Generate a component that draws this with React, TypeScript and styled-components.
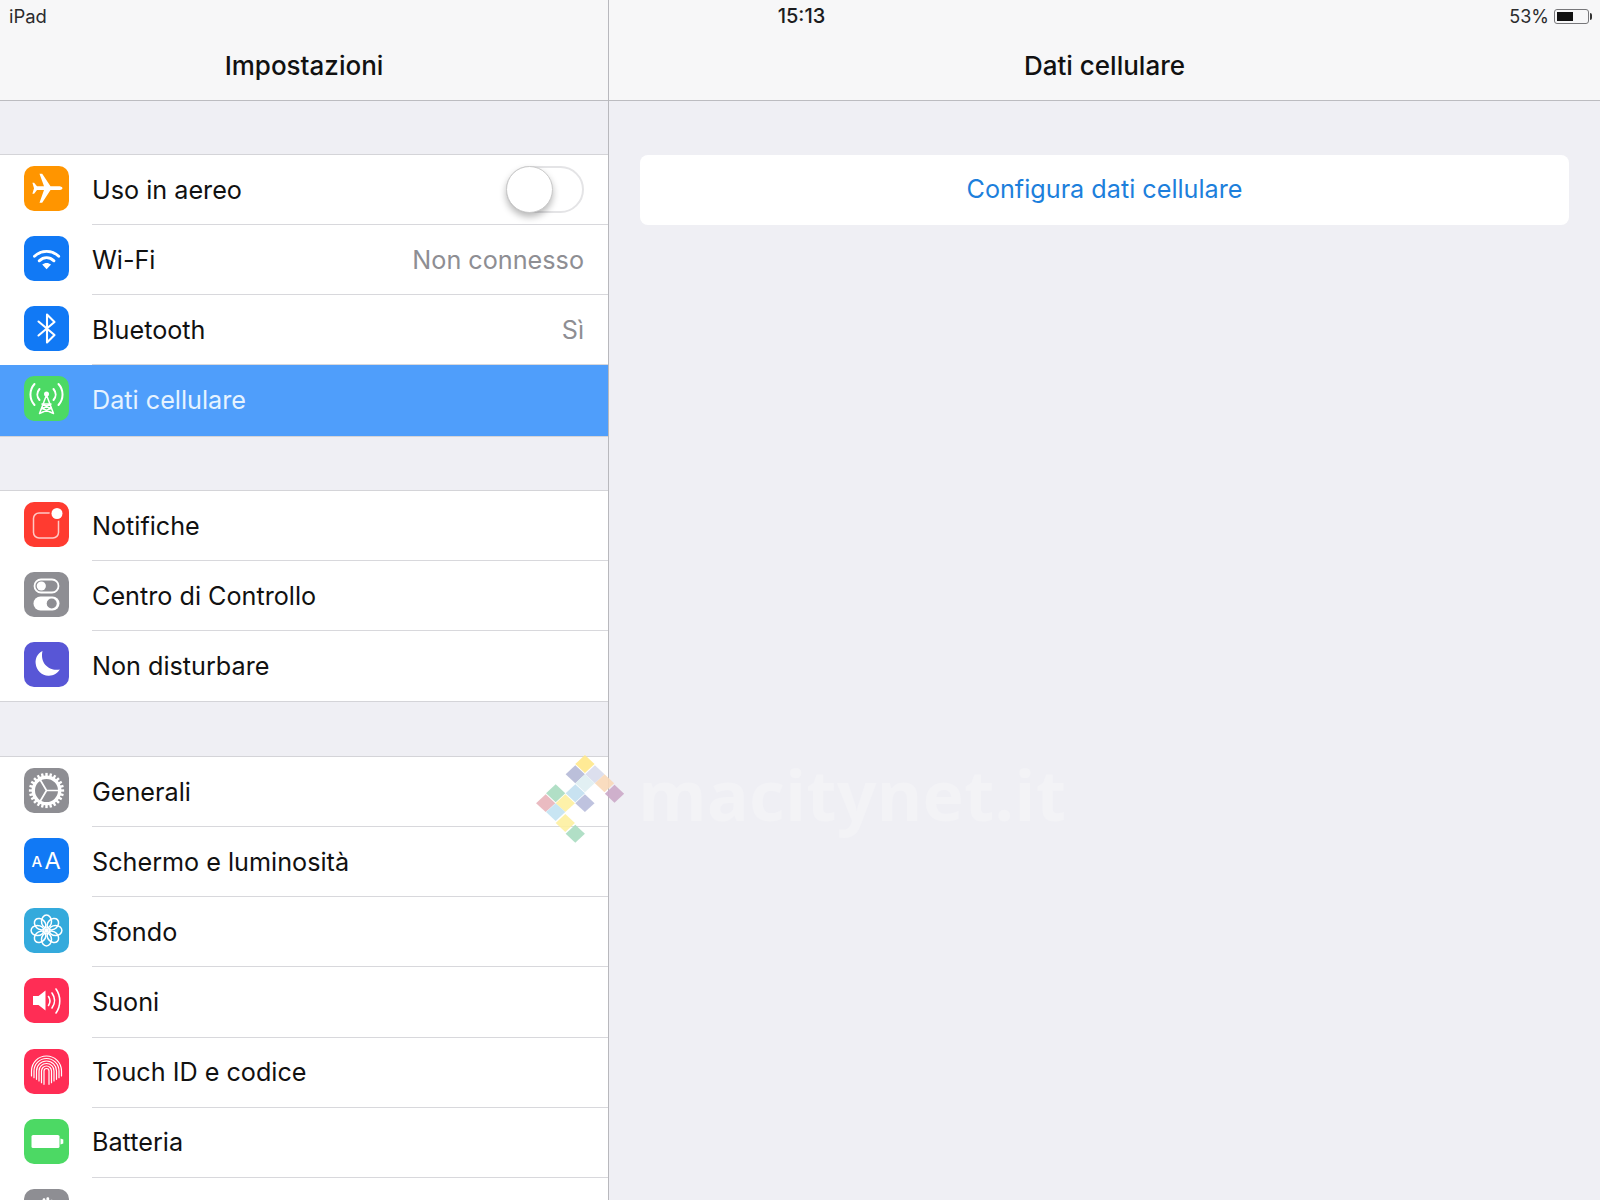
import React from "react"
import styled, { createGlobalStyle } from "styled-components"

const GlobalStyle = createGlobalStyle`
html, body {
    margin: 0;
    padding: 0;
    background: #efeff4;
}
* {
    box-sizing: border-box;
}
`

const ink = { fill: "none", stroke: "#fff", strokeLinecap: "round", strokeLinejoin: "round" } as const

const PlaneIcon = () => (
    <svg viewBox="0 0 45 45" width="45" height="45">
        <path fill="#fff" d="M38.500 22.200c0-1.300-2.200-1.900-4.200-1.900H26.500L18.200 7.700h-2.700L20 20.300h-7l-2.900-3.600H8.400L10 22.200 8.400 27.700h1.700l2.900-3.600h7L15.500 36.700h2.700l8.300-12.600h7.800c2 0 4.200-.6 4.200-1.900z" />
    </svg>
)

const WifiIcon = () => (
    <svg viewBox="0 0 45 45" width="45" height="45">
        <path {...ink} strokeWidth="2.900" d="M10.500 20.200c7-6.400 17.200-6.400 24.200 0" />
        <path {...ink} strokeWidth="2.900" d="M15.200 24.800c4.500-4 10.300-4 14.800 0" />
        <path fill="#fff" d="M22.600 33.200l-4.400-4.600c2.500-2.200 6.300-2.200 8.800 0z" />
    </svg>
)

const BluetoothIcon = () => (
    <svg viewBox="0 0 45 45" width="45" height="45">
        <path {...ink} strokeWidth="2.100" d="M14.500 15.500l16 13.500-7.500 7.500V8.500l7.500 7.500-16 13.500" />
    </svg>
)

const CellularIcon = () => (
    <svg viewBox="0 0 45 45" width="45" height="45">
        <circle cx="22.500" cy="18" r="2.500" fill="#fff" />
        <path {...ink} strokeWidth="1.500" d="M22.500 19L15.500 37.500M22.500 19l7 18.500M19 28h7M17.500 33l9.500-5M27.500 33l-9.500-5M15.500 37.500l10-4.500M29.500 37.500l-10-4.500" />
        <path {...ink} strokeWidth="2" d="M15.500 13c-2.800 3.300-2.800 7.700 0 11M29.500 13c2.800 3.300 2.800 7.700 0 11M10.500 8c-5.400 6-5.400 15 0 21M34.500 8c5.400 6 5.400 15 0 21" />
    </svg>
)

const NotifyIcon = () => (
    <svg viewBox="0 0 45 45" width="45" height="45">
        <rect x="9.500" y="11" width="25" height="25" rx="5.500" {...ink} stroke="#ffc9c5" strokeWidth="1.500" />
        <circle cx="33" cy="11.500" r="7.400" fill="#ff3b30" />
        <circle cx="33" cy="11.500" r="5.500" fill="#fff" />
    </svg>
)

const SwitchesIcon = () => (
    <svg viewBox="0 0 45 45" width="45" height="45">
        <rect x="10.500" y="7.500" width="24" height="13" rx="6.500" {...ink} strokeWidth="1.800" />
        <circle cx="17.300" cy="14" r="4.600" fill="#fff" />
        <rect x="9.500" y="24.500" width="26" height="14" rx="7" fill="#fff" />
        <circle cx="27.700" cy="31.500" r="5" fill="#8e8e93" />
    </svg>
)

const MoonIcon = () => (
    <svg viewBox="0 0 45 45" width="45" height="45">
        <path fill="#fff" d="M18.500 9C13.500 11.500 11 16.500 11.700 21.800c.8 7 6.600 12.300 13.300 11.900 4.600-.3 8.700-2.600 10.800-6.300-9.600 2.300-20.300-5.400-17.300-18.400z" />
    </svg>
)

const GearIcon = () => (
    <svg viewBox="0 0 45 45" width="45" height="45">
        {Array.from({ length: 24 }).map((_, i) => (
            <rect key={i} x="21.300" y="4.900" width="2.400" height="5" fill="#fff" transform={`rotate(${i * 15} 22.500 22.500)`} />
        ))}
        <circle cx="22.500" cy="22.500" r="13.200" {...ink} strokeWidth="3.400" />
        <path {...ink} strokeWidth="1.700" d="M22.500 22.500H35M22.500 22.500L16 11.500M22.500 22.500L16 33.500" />
    </svg>
)

const AaIcon = () => (
    <svg viewBox="0 0 45 45" width="45" height="45">
        <text x="7.500" y="29" fill="#fff" fontFamily="Inter, sans-serif" fontSize="15" fontWeight="500">A</text>
        <text x="20.500" y="31" fill="#fff" fontFamily="Inter, sans-serif" fontSize="23.500">A</text>
    </svg>
)

const FlowerIcon = () => (
    <svg viewBox="0 0 45 45" width="45" height="45">
        {Array.from({ length: 8 }).map((_, i) => (
            <ellipse key={i} cx="22.500" cy="13.500" rx="5" ry="6.400" {...ink} strokeWidth="1.500" transform={`rotate(${i * 45} 22.500 22.500)`} />
        ))}
        <circle cx="22.500" cy="22.500" r="1.900" fill="#fff" />
    </svg>
)

const SpeakerIcon = () => (
    <svg viewBox="0 0 45 45" width="45" height="45">
        <path fill="#fff" d="M9 18h5.500l7-5.500v20l-7-5.500H9z" />
        <path {...ink} strokeWidth="1.600" d="M24.500 18.500c2 3 2 6 0 9M28 15c3.500 5 3.500 10 0 15M32 11c5 7 5 17 0 24" />
    </svg>
)

const FingerprintIcon = () => (
    <svg viewBox="0 0 45 45" width="45" height="45">
        <g {...ink} strokeWidth="1.200">
            {[15, 12.500, 10, 7.500, 5, 2.500].map((r)=>(
                <path key={r} d={`M${22.500 - r} ${37 - r / 1.500}V22a${r} ${r} 0 0 1 ${r * 2} 0V${37 - r / 1.500}`} />
            ))}
        </g>
    </svg>
)

const BatteryGlyph = () => (
    <svg viewBox="0 0 45 45" width="45" height="45">
        <rect x="7.500" y="16" width="28" height="13" rx="1.600" fill="#fff" />
        <path fill="#fff" d="M36.500 19.500l2.800 1v4l-2.800 1z" />
    </svg>
)

const HandIcon = () => (
    <svg viewBox="0 0 45 45" width="45" height="45">
        <path fill="#fff" d="M15 24V14c0-1.800 2.600-1.800 2.600 0v7h1V10.500c0-1.800 2.800-1.800 2.800 0V21h1V9.500c0-1.800 2.800-1.800 2.800 0V21h1V12c0-1.800 2.700-1.800 2.700 0v16c0 6-3.500 9-8 9-4 0-6-2-8-6l-3.500-7c-.8-1.600 1.300-2.800 2.400-1.500z" />
    </svg>
)

const Shell = styled.div`
position: relative;
width: 1600px;
height: 1200px;
overflow: hidden;
display: flex;
background-color: #efeff4;
font-family: Inter, "Liberation Sans", sans-serif;
`
const StatusBar = styled.div`
position: absolute;
top: 0;
left: 0;
right: 0;
height: 32px;
padding: 0 11px 0 9px;
display: grid;
grid-template-columns: 1fr auto 1fr;
align-items: center;
font-size: 18.400px;
color: #2b2b2d;
`
const Clock = styled.span`
margin-left: 5px;
font-weight: 500;
font-size: 20px;
color: #1c1c1e;
`
const Power = styled.div`
justify-self: end;
display: flex;
align-items: center;
gap: 5px;
font-size: 18px;
`
const BatteryCase = styled.div`
position: relative;
width: 35px;
height: 15px;
padding: 2px;
border: 1px solid #77777a;
border-radius: 3px;
&::after{
    content: "";
    position: absolute;
    top: 3px;
    right: -4px;
    width: 2px;
    height: 7px;
    border-radius: 0 2px 2px 0;
    background-color: #333;
}
`
const BatteryLevel = styled.div<{level: number}>`
height: 100%;
width: ${({level})=>level}%;
background-color: #111;
`
const Sidebar = styled.aside`
width: 609px;
flex-shrink: 0;
border-right: 1px solid #b8b8bd;
`
const Detail = styled.main`
flex: 1;
`
const NavBar = styled.header`
height: 101px;
padding-top: 31px;
display: flex;
align-items: center;
justify-content: center;
background-color: #f7f7f8;
border-bottom: 1px solid #bcbcc0;
font-size: 26px;
font-weight: 500;
color: #111;
`
const Group = styled.section`
margin-top: 55.500px;
background-color: #fff;
box-shadow: 0 -1px 0 #d4d4d8, 0 1px 0 #d4d4d8;
&:first-of-type{
    margin-top: 54px;
}
`
const Row = styled.div<{active?: boolean}>`
height: 70.150px;
padding-left: 23.500px;
display: flex;
align-items: stretch;
gap: 23.500px;
font-size: 25.200px;
color: ${({active})=>active ? "#e6f3ff" : "#111"};
background-color: ${({active})=>active ? "#4f9efb" : "transparent"};
`
const IconTile = styled.div<{tone: string}>`
align-self: center;
width: 45px;
height: 45px;
margin-bottom: 3px;
flex-shrink: 0;
border-radius: 10px;
overflow: hidden;
display: flex;
background-color: ${({tone})=>tone};
`
const RowBody = styled.div<{flat?: boolean}>`
flex: 1;
padding-right: 24px;
display: flex;
align-items: center;
justify-content: space-between;
border-bottom: 1px solid ${({flat})=>flat ? "transparent" : "#d8d8dc"};
`
const RowValue = styled.span`
color: #8e8e93;
`
const Toggle = styled.div`
position: relative;
width: 78px;
height: 47px;
border: 2px solid #e4e4e6;
border-radius: 24px;
background-color: #fff;
`
const Knob = styled.div`
position: absolute;
top: -2px;
left: -2px;
width: 47px;
height: 47px;
border-radius: 50%;
background-color: #fff;
border: 1px solid #c9c9c9;
box-shadow: 0 4px 7px rgba(0,0,0,.28);
`
const DetailBody = styled.div`
padding: 54px 31px 0;
`
const ActionCard = styled.div`
height: 70px;
padding-bottom: 2px;
display: flex;
align-items: center;
justify-content: center;
background-color: #fff;
border-radius: 8px;
font-size: 25.200px;
color: #1d7fdc;
`
const Watermark = styled.div`
position: absolute;
left: 520px;
top: 740px;
display: flex;
align-items: center;
pointer-events: none;
`
const WatermarkName = styled.span`
margin: 0 0 6px 11px;
font-family: "Open Sans", sans-serif;
font-size: 70px;
font-weight: 700;
color: rgba(255,255,255,.24);
`

const marks = [
    [182, 72, "#ffe88a"], [155, 103, "#b4b8d6"], [210, 103, "#d8dcec"], [182, 130, "#dfeef2"],
    [237, 130, "#f8d8b8"], [265, 162, "#cba9c8"], [100, 160, "#a8dcc0"], [155, 160, "#c2dff0"],
    [72, 190, "#e8b4ba"], [127, 190, "#fdf0a0"], [182, 190, "#b8bcdc"], [100, 217, "#c2e2f2"],
    [127, 250, "#fdf0a0"], [155, 282, "#a8dcc0"],
] as const

type RowData = {
    label: string
    tone: string
    icon: React.ReactNode
    value?: string
    toggle?: boolean
    active?: boolean
}

const rows: RowData[][] = [
    [
        { label: "Uso in aereo", tone: "#ff9500", icon: <PlaneIcon />, toggle: true },
        { label: "Wi-Fi", tone: "#1179f5", icon: <WifiIcon />, value: "Non connesso" },
        { label: "Bluetooth", tone: "#1179f5", icon: <BluetoothIcon />, value: "Sì" },
        { label: "Dati cellulare", tone: "#4cd964", icon: <CellularIcon />, active: true },
    ],
    [
        { label: "Notifiche", tone: "#ff3b30", icon: <NotifyIcon /> },
        { label: "Centro di Controllo", tone: "#8e8e93", icon: <SwitchesIcon /> },
        { label: "Non disturbare", tone: "#5856d6", icon: <MoonIcon /> },
    ],
    [
        { label: "Generali", tone: "#8e8e93", icon: <GearIcon /> },
        { label: "Schermo e luminosità", tone: "#1179f5", icon: <AaIcon /> },
        { label: "Sfondo", tone: "#34aadc", icon: <FlowerIcon /> },
        { label: "Suoni", tone: "#ff2d55", icon: <SpeakerIcon /> },
        { label: "Touch ID e codice", tone: "#ff2d55", icon: <FingerprintIcon /> },
        { label: "Batteria", tone: "#4cd964", icon: <BatteryGlyph /> },
        // last row runs off the bottom of the screen, only its icon shows
        { label: "", tone: "#8e8e93", icon: <HandIcon /> },
    ],
]

const App = ()=>{
    return(
        <Shell>
            <GlobalStyle />
            <Sidebar>
                <NavBar>Impostazioni</NavBar>
                {rows.map((group, g)=>(
                    <Group key={g}>
                        {group.map((row, i)=>(
                            <Row key={i} active={row.active}>
                                <IconTile tone={row.tone}>{row.icon}</IconTile>
                                <RowBody flat={row.active || i === group.length - 1}>
                                    <span>{row.label}</span>
                                    {row.value && <RowValue>{row.value}</RowValue>}
                                    {row.toggle && <Toggle><Knob /></Toggle>}
                                </RowBody>
                            </Row>
                        ))}
                    </Group>
                ))}
            </Sidebar>
            <Detail>
                <NavBar>Dati cellulare</NavBar>
                <DetailBody>
                    <ActionCard>Configura dati cellulare</ActionCard>
                </DetailBody>
            </Detail>
            <StatusBar>
                <span>iPad</span>
                <Clock>15:13</Clock>
                <Power>
                    53%
                    <BatteryCase><BatteryLevel level={55} /></BatteryCase>
                </Power>
            </StatusBar>
            <Watermark>
                <svg viewBox="0 0 300 340" width="107" height="113" preserveAspectRatio="none">
                    {marks.map(([x, y, colour], i)=>(
                        <path key={i} d={`M${x} ${y - 27}l27 27-27 27-27-27z`} fill={colour} fillOpacity=".9" />
                    ))}
                </svg>
                <WatermarkName>macitynet.it</WatermarkName>
            </Watermark>
        </Shell>
    )
}

export default App
